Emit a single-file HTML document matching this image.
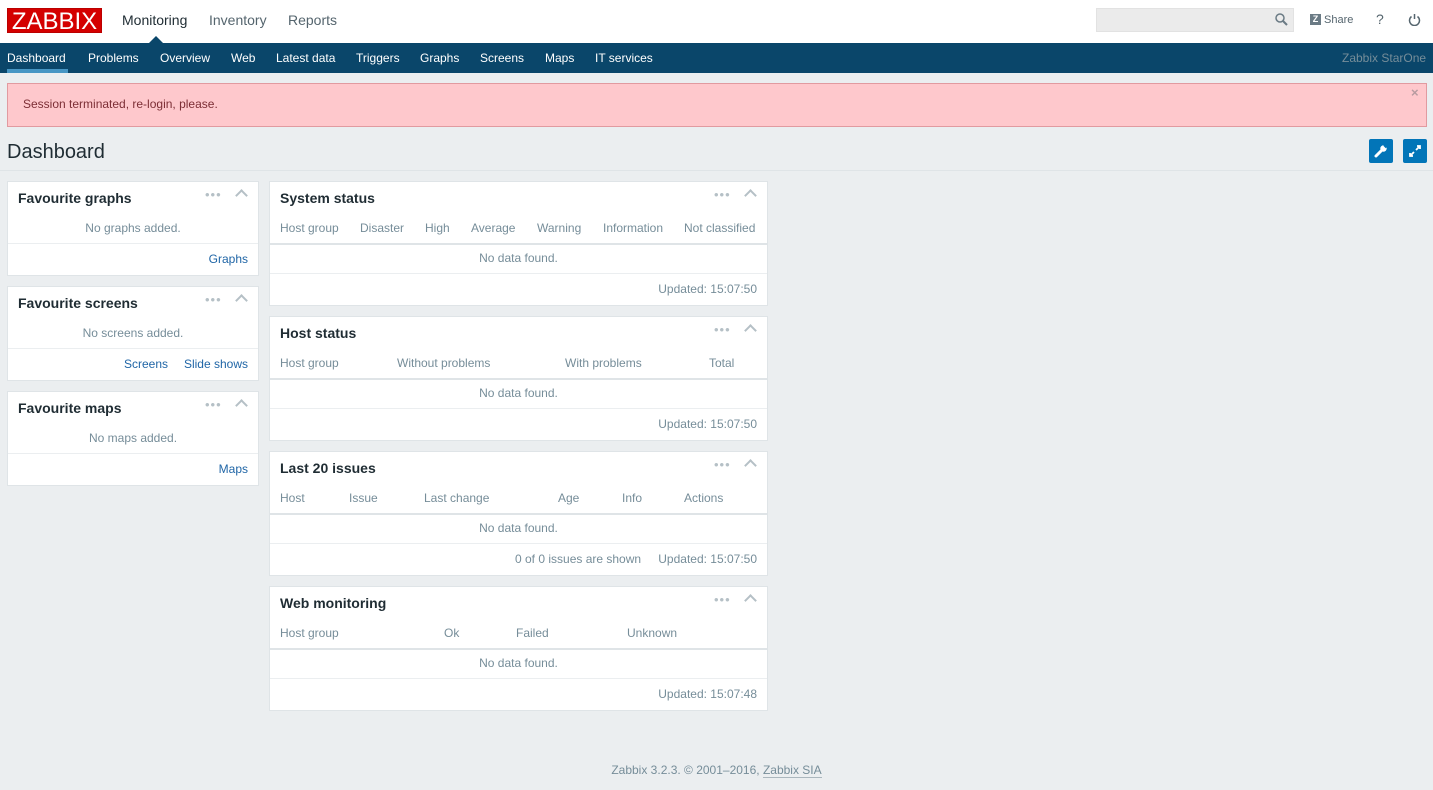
<!DOCTYPE html>
<html><head><meta charset="utf-8"><style>
*{margin:0;padding:0;box-sizing:border-box}
body{width:1433px;height:790px;background:#ebeef0;font-family:"Liberation Sans",Arial,sans-serif;font-size:12px;color:#1f2c33;position:relative;overflow:hidden}
.a{position:absolute;white-space:nowrap;line-height:14px}
.top{position:absolute;left:0;top:0;width:1433px;height:43px;background:#fff}
.nav{position:absolute;left:0;top:43px;width:1433px;height:30px;background:#0a466a}
.nav span{position:absolute;top:8px;color:#fff;font-size:12px;line-height:14px}
.w{position:absolute;background:#fff;border:1px solid #dfe4e7}
.wt{position:absolute;left:10px;top:8px;font-weight:bold;font-size:14px;color:#1f2c33;line-height:16px}
.dots{position:absolute;top:5px;color:#b5c0c6;font-size:13px;letter-spacing:1px}
.car{position:absolute;top:9px;width:9px;height:9px;border-left:2px solid #b5c0c6;border-top:2px solid #b5c0c6;transform:rotate(45deg)}
.g{color:#768d99}
.ln{color:#1f65a6}
.hr{position:absolute;left:0;right:0;height:1px;background:#ebeef0}
.hr2{position:absolute;left:0;right:0;height:2px;background:#dfe4e7}
</style></head><body>
<div class="top">
 <div style="position:absolute;left:7px;top:8px;width:95px;height:25px;background:#d40000;color:#fff;font-size:24px;line-height:25px;text-align:center;border:1px solid #b00">ZABBIX</div>
 <div class="a" style="left:122px;top:12px;font-size:14px;line-height:16px;color:#1f2c33">Monitoring</div>
 <div class="a" style="left:209px;top:12px;font-size:14px;line-height:16px;color:#55656e">Inventory</div>
 <div class="a" style="left:288px;top:12px;font-size:14px;line-height:16px;color:#55656e">Reports</div>
 <div style="position:absolute;left:149px;top:36px;width:0;height:0;border-left:7px solid transparent;border-right:7px solid transparent;border-bottom:7px solid #0a466a"></div>
 <div style="position:absolute;left:1096px;top:8px;width:198px;height:24px;background:#ebebeb;border:1px solid #e2e2e2"></div>
 <svg style="position:absolute;left:1275px;top:13px" width="13" height="13"><circle cx="5" cy="5" r="4" fill="none" stroke="#6a7a84" stroke-width="1.5"/><line x1="8" y1="8" x2="12" y2="12" stroke="#6a7a84" stroke-width="2"/></svg>
 <div style="position:absolute;left:1310px;top:14px;width:11px;height:11px;background:#6b7b85;color:#fff;font-size:9px;font-weight:bold;line-height:11px;text-align:center">Z</div>
 <div class="a" style="left:1324px;top:13px;font-size:11px;color:#55656e">Share</div>
 <div class="a" style="left:1376px;top:12px;font-size:14px;color:#55656e">?</div>
 <svg style="position:absolute;left:1408px;top:13px" width="13" height="13"><path d="M3.5 3.5 A5 5 0 1 0 9.5 3.5" fill="none" stroke="#55656e" stroke-width="1.5"/><line x1="6.5" y1="1" x2="6.5" y2="6" stroke="#55656e" stroke-width="1.5"/></svg>
</div>
<div class="nav">
 <span style="left:7px">Dashboard</span>
 <div style="position:absolute;left:7px;top:26px;width:61px;height:4px;background:#4796c4"></div>
 <span style="left:88px">Problems</span><span style="left:160px">Overview</span><span style="left:231px">Web</span><span style="left:276px">Latest data</span><span style="left:356px">Triggers</span><span style="left:420px">Graphs</span><span style="left:480px">Screens</span><span style="left:545px">Maps</span><span style="left:595px">IT services</span>
 <span style="left:1342px;color:#768d99">Zabbix StarOne</span>
</div>
<div style="position:absolute;left:7px;top:83px;width:1420px;height:44px;background:#fec8cc;border:1px solid #e19aa0"></div>
<div class="a" style="left:23px;top:97px;color:#7c2e35">Session terminated, re-login, please.</div>
<div class="a" style="left:1411px;top:86px;color:#b79ba0;font-size:13px;font-weight:bold">×</div>
<div class="a" style="left:7px;top:141px;font-size:20px;line-height:22px">Dashboard</div>
<div style="position:absolute;left:0;top:170px;width:1433px;height:1px;background:#dfe4e7"></div>
<div style="position:absolute;left:1369px;top:139px;width:24px;height:24px;background:#0275b8;border-radius:2px"><svg width="24" height="24"><path d="M7 17 L13 11" stroke="#fff" stroke-width="3" stroke-linecap="round"/><circle cx="14.5" cy="9.5" r="3.2" fill="#fff"/><path d="M15 6 L17.5 8.5" stroke="#0275b8" stroke-width="2"/></svg></div>
<div style="position:absolute;left:1403px;top:139px;width:24px;height:24px;background:#0275b8;border-radius:2px"><svg width="24" height="24"><path d="M13 11 L17 7 M14 7 H17 V10 M11 13 L7 17 M7 14 V17 H10" stroke="#fff" stroke-width="1.8" fill="none"/></svg></div>

<div class="w" style="left:7px;top:181px;width:252px;height:95px">
 <div class="wt">Favourite graphs</div><div class="dots" style="left:197px">•••</div><div class="car" style="left:229px"></div>
 <div class="a g" style="left:0;width:250px;text-align:center;top:39px">No graphs added.</div>
 <div class="hr" style="top:61px"></div>
 <div class="a ln" style="right:10px;top:70px">Graphs</div>
</div>
<div class="w" style="left:7px;top:286px;width:252px;height:95px">
 <div class="wt">Favourite screens</div><div class="dots" style="left:197px">•••</div><div class="car" style="left:229px"></div>
 <div class="a g" style="left:0;width:250px;text-align:center;top:39px">No screens added.</div>
 <div class="hr" style="top:61px"></div>
 <div class="a ln" style="left:116px;top:70px">Screens</div><div class="a ln" style="right:10px;top:70px">Slide shows</div>
</div>
<div class="w" style="left:7px;top:391px;width:252px;height:95px">
 <div class="wt">Favourite maps</div><div class="dots" style="left:197px">•••</div><div class="car" style="left:229px"></div>
 <div class="a g" style="left:0;width:250px;text-align:center;top:39px">No maps added.</div>
 <div class="hr" style="top:61px"></div>
 <div class="a ln" style="right:10px;top:70px">Maps</div>
</div>

<div class="w" style="left:269px;top:181px;width:499px;height:125px">
 <div class="wt">System status</div><div class="dots" style="left:444px">•••</div><div class="car" style="left:476px"></div>
 <div class="a g" style="left:10px;top:39px">Host group</div><div class="a g" style="left:90px;top:39px">Disaster</div><div class="a g" style="left:155px;top:39px">High</div><div class="a g" style="left:201px;top:39px">Average</div><div class="a g" style="left:267px;top:39px">Warning</div><div class="a g" style="left:333px;top:39px">Information</div><div class="a g" style="left:414px;top:39px">Not classified</div>
 <div class="hr2" style="top:61px"></div>
 <div class="a g" style="left:0;width:497px;text-align:center;top:69px">No data found.</div>
 <div class="hr" style="top:91px"></div>
 <div class="a g" style="right:10px;top:100px">Updated: 15:07:50</div>
</div>
<div class="w" style="left:269px;top:316px;width:499px;height:125px">
 <div class="wt">Host status</div><div class="dots" style="left:444px">•••</div><div class="car" style="left:476px"></div>
 <div class="a g" style="left:10px;top:39px">Host group</div><div class="a g" style="left:127px;top:39px">Without problems</div><div class="a g" style="left:295px;top:39px">With problems</div><div class="a g" style="left:439px;top:39px">Total</div>
 <div class="hr2" style="top:61px"></div>
 <div class="a g" style="left:0;width:497px;text-align:center;top:69px">No data found.</div>
 <div class="hr" style="top:91px"></div>
 <div class="a g" style="right:10px;top:100px">Updated: 15:07:50</div>
</div>
<div class="w" style="left:269px;top:451px;width:499px;height:125px">
 <div class="wt">Last 20 issues</div><div class="dots" style="left:444px">•••</div><div class="car" style="left:476px"></div>
 <div class="a g" style="left:10px;top:39px">Host</div><div class="a g" style="left:79px;top:39px">Issue</div><div class="a g" style="left:154px;top:39px">Last change</div><div class="a g" style="left:288px;top:39px">Age</div><div class="a g" style="left:352px;top:39px">Info</div><div class="a g" style="left:414px;top:39px">Actions</div>
 <div class="hr2" style="top:61px"></div>
 <div class="a g" style="left:0;width:497px;text-align:center;top:69px">No data found.</div>
 <div class="hr" style="top:91px"></div>
 <div class="a g" style="left:245px;top:100px">0 of 0 issues are shown</div>
 <div class="a g" style="right:10px;top:100px">Updated: 15:07:50</div>
</div>
<div class="w" style="left:269px;top:586px;width:499px;height:125px">
 <div class="wt">Web monitoring</div><div class="dots" style="left:444px">•••</div><div class="car" style="left:476px"></div>
 <div class="a g" style="left:10px;top:39px">Host group</div><div class="a g" style="left:174px;top:39px">Ok</div><div class="a g" style="left:246px;top:39px">Failed</div><div class="a g" style="left:357px;top:39px">Unknown</div>
 <div class="hr2" style="top:61px"></div>
 <div class="a g" style="left:0;width:497px;text-align:center;top:69px">No data found.</div>
 <div class="hr" style="top:91px"></div>
 <div class="a g" style="right:10px;top:100px">Updated: 15:07:48</div>
</div>

<div class="a g" style="left:0;width:1433px;text-align:center;top:763px">Zabbix 3.2.3. © 2001–2016, <span style="border-bottom:1px solid #aab6bd">Zabbix SIA</span></div>
</body></html>
